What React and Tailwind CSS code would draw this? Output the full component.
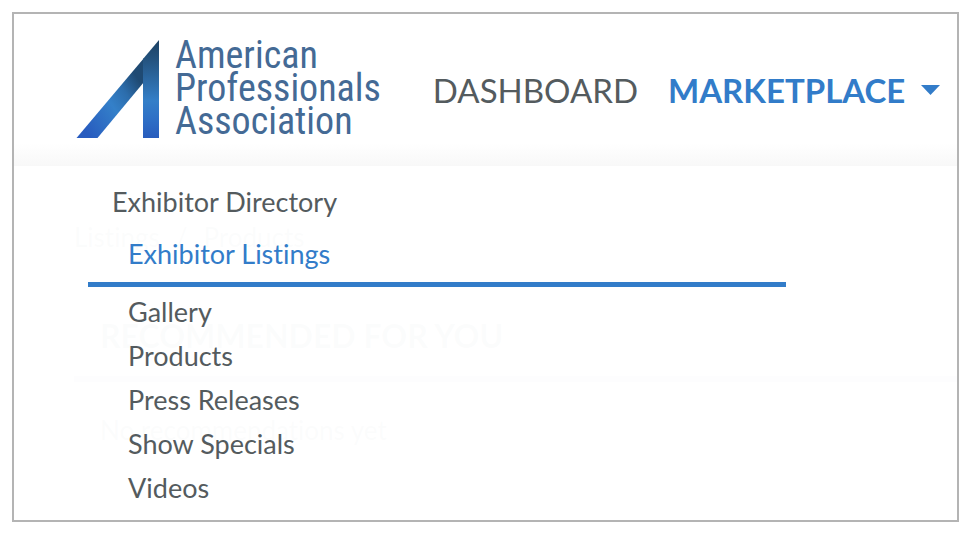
import { useState } from "react";

const listings = [
    "Gallery",
    "Products",
    "Press Releases",
    "Show Specials",
    "Videos"
];

function Logo() {
    return (
        <a href="#home" className="flex shrink-0 items-center gap-[15px]">
            <svg width="84" height="100" viewBox="0 0 84 100" aria-hidden="true">
                <defs>
                    <linearGradient id="stem" x1="0" y1="0" x2="0" y2="1">
                        <stop offset="0" stopColor="#1c4163" />
                        <stop offset="0.2" stopColor="#24537f" />
                        <stop offset="0.62" stopColor="#347fc8" />
                        <stop offset="0.8" stopColor="#2e70c6" />
                        <stop offset="1" stopColor="#285cbd" />
                    </linearGradient>
                    <linearGradient id="leg" gradientUnits="userSpaceOnUse" x1="8" y1="90" x2="68" y2="50">
                        <stop offset="0" stopColor="#285cbf" />
                        <stop offset="0.5" stopColor="#3480c9" />
                        <stop offset="0.75" stopColor="#2c6dac" />
                        <stop offset="1" stopColor="#1f4a73" />
                    </linearGradient>
                </defs>
                <path d="M0.5 100 L68 20 V44 L21.5 100 Z" fill="url(#leg)" />
                <path d="M67 21 L83 2 V100 H67 Z" fill="url(#stem)" />
            </svg>
            <span className="font-['Roboto_Condensed','Liberation_Sans_Narrow',sans-serif] text-[38px] leading-[33px] text-[#446a95]">
                American
                <br />
                Professionals
                <br />
                Association
            </span>
        </a>
    );
}

function MarketplaceMenu() {
    return (
        <div className="absolute inset-0 bg-white/98 pt-[14px] pl-[74px] text-[27px] leading-[44px]">
            <a href="#directory" className="block pl-6">
                Exhibitor Directory
            </a>
            <a
                href="#listings"
                aria-current="page"
                className="mt-2 mr-[171px] block border-b-5 border-[#327cc9] pb-[6px] pl-10 text-[#327cc9]"
            >
                Exhibitor Listings
            </a>
            <ul className="mt-[3px] pl-10">
                {listings.map((item) => (
                    <li key={item}>
                        <a href="#listings">{item}</a>
                    </li>
                ))}
            </ul>
        </div>
    );
}

export default function App() {
    const [menuOpen, setMenuOpen] = useState(true);

    return (
        <div className="bg-white pt-3 pr-[7px] pb-[15px] pl-3 font-['Lato',sans-serif] text-[#545b5e] [font-variant-ligatures:none]">
            <div className="flex min-h-[510px] flex-col border-2 border-[#b4b4b4]">
                {/* Header */}
                <header className="flex items-center bg-linear-to-b from-white from-85% to-[#f8f8f8] pt-6 pb-7 pl-[62px]">
                    <Logo />
                    <nav className="ml-[52px] flex items-center gap-[30px] pt-1 text-[33px] leading-[44px]">
                        <a href="#dashboard">DASHBOARD</a>
                        <button
                            type="button"
                            aria-expanded={menuOpen}
                            onClick={() => setMenuOpen(!menuOpen)}
                            className="flex items-center gap-4 font-bold text-[#327cc9]"
                        >
                            MARKETPLACE
                            <svg width="19" height="10" viewBox="0 0 19 10" aria-hidden="true">
                                <path d="M0 0 H19 L9.5 10 Z" fill="currentColor" />
                            </svg>
                        </button>
                    </nav>
                </header>

                {/* Page content, with the open menu over it */}
                <div className="relative flex-1">
                    <main className="pt-[51px] text-[26px] leading-[40px]">
                        <p className="flex gap-4 pl-[60px]">
                            <span>Listings</span>
                            <span>/</span>
                            <span>Products</span>
                        </p>
                        <h2 className="mt-[59px] ml-[60px] border-b-6 border-gray-400 pb-5 pl-[26px] text-[32px] font-bold">
                            RECOMMENDED FOR YOU
                        </h2>
                        <p className="mt-7 pl-[86px]">No recommendations yet</p>
                    </main>
                    {menuOpen && <MarketplaceMenu />}
                </div>
            </div>
        </div>
    );
}
